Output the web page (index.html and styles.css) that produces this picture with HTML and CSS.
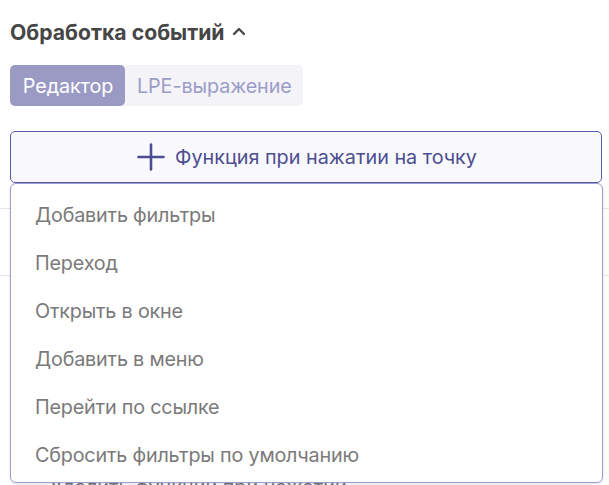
FILE: index.html
```html
<!DOCTYPE html>
<html lang="ru">
<head>
<meta charset="utf-8">
<link rel="stylesheet" href="styles.css">
</head>
<body>
<div class="panel">
  <h2 class="title">Обработка событий
    <svg class="caret" width="14" height="10" viewBox="0 0 14 10"><path d="M2 8 L7 3 L12 8" fill="none" stroke="#4a4a4a" stroke-width="2.4" stroke-linecap="round" stroke-linejoin="round"/></svg>
  </h2>
  <div class="tabs">
    <span class="tab active">Редактор</span>
    <span class="tab">LPE-выражение</span>
  </div>
  <div class="action-wrap">
    <button class="add-btn">
      <svg width="28" height="28" viewBox="0 0 28 28"><path d="M14 1.5 V26.5 M1.5 14 H26.5" stroke="#4d4d8f" stroke-width="2.6" stroke-linecap="round"/></svg>
      <span>Функция при нажатии на точку</span>
    </button>
    <ul class="menu">
      <li>Добавить фильтры</li>
      <li>Переход</li>
      <li>Открыть в окне</li>
      <li>Добавить в меню</li>
      <li>Перейти по ссылке</li>
      <li>Сбросить фильтры по умолчанию</li>
    </ul>
  </div>
  <div class="under">
    <div class="row"></div>
    <div class="row"></div>
    <div class="row tall"></div>
    <div class="under-text">Удалить функции при нажатии</div>
  </div>
</div>
</body>
</html>
```
FILE: styles.css
```css
* { box-sizing: border-box; }
html, body { margin: 0; padding: 0; background: #fff; overflow: hidden; }
body { font-family: Inter, "Noto Sans", sans-serif; width: 609px; height: 485px; }
.panel { padding: 0 7px 0 10px; }
.title {
  margin: 0;
  padding-top: 17px;
  height: 65px;
  font-size: 21.2px;
  font-weight: 700;
  color: #464646;
  display: flex;
  align-items: flex-start;
  gap: 7px;
  line-height: 30px;
}
.caret { margin-top: 9px; }
.tabs {
  display: inline-flex;
  background: #f3f3f8;
  border-radius: 5px;
  height: 41px;
}
.tab {
  display: flex;
  align-items: center;
  padding: 0 11px 0 12px;
  font-size: 19.8px;
  color: #9c9cc8;
  border-radius: 5px;
  letter-spacing: -0.1px;
}
.tab.active { background: #9a9ac5; color: #fff; justify-content: center; width: 115px; }
.action-wrap { position: relative; margin-top: 25px; }
.add-btn {
  width: 100%;
  height: 52px;
  border: 1px solid #5b5ba6;
  border-radius: 5px;
  background: #f9f9fd;
  display: flex;
  align-items: center;
  justify-content: center;
  gap: 10px;
  font-family: inherit;
  font-size: 19.8px;
  color: #4d4d8f;
  padding: 0 0 0 2px;
}
.menu {
  position: absolute;
  left: 0;
  right: -1px;
  top: 52px;
  margin: 0;
  padding: 7px 0 3px;
  list-style: none;
  background: #fff;
  border: 1px solid #9d9dd6;
  border-radius: 6px;
  box-shadow: 0 1px 3px rgba(0,0,0,0.12);
  z-index: 2;
}
.menu li {
  height: 48px;
  display: flex;
  align-items: center;
  padding-left: 24px;
  font-size: 19.8px;
  letter-spacing: -0.2px;
  color: #7a7a7a;
}
.under { margin: 0 -7px 0 -10px; }
.row { height: 26px; border-bottom: 1px solid #e6e6e6; }
.row + .row { height: 67px; }
.row.tall { height: 200px; border-bottom: none; }
.under-text { padding-left: 50px; font-size: 19.8px; color: #777; line-height: 22px; }
```
